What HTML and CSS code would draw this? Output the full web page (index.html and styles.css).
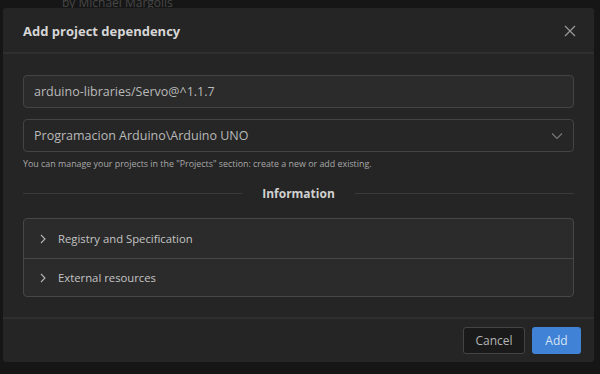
FILE: index.html
```html
<!DOCTYPE html>
<html>
<head>
<meta charset="utf-8">
<link rel="stylesheet" href="styles.css">
</head>
<body>
<div class="page">
  <div class="page-top">by Michael Margolis</div>
</div>
<div class="modal">
  <div class="modal-header">
    <h1 class="modal-title">Add project dependency</h1>
    <button class="close" aria-label="Close">
      <svg width="12" height="12" viewBox="0 0 12 12"><path d="M1 1L11 11M11 1L1 11" stroke="#9a9a9a" stroke-width="1.2" fill="none"/></svg>
    </button>
  </div>
  <div class="modal-body">
    <div class="field">arduino-libraries/Servo@^1.1.7</div>
    <div class="field select">
      <span>Programacion Arduino\Arduino UNO</span>
      <svg width="12" height="8" viewBox="0 0 12 8"><path d="M1 1.5L6 6.5L11 1.5" stroke="#7a7a7a" stroke-width="1.1" fill="none"/></svg>
    </div>
    <p class="help">You can manage your projects in the "Projects" section: create a new or add existing.</p>
    <div class="divider"><span class="line"></span><span class="divider-text">Information</span><span class="line"></span></div>
    <div class="accordion">
      <div class="acc-item">
        <svg width="8" height="10" viewBox="0 0 8 10"><path d="M2 1L6 5L2 9" stroke="#b5b5b5" stroke-width="1.1" fill="none"/></svg>
        <span>Registry and Specification</span>
      </div>
      <div class="acc-item">
        <svg width="8" height="10" viewBox="0 0 8 10"><path d="M2 1L6 5L2 9" stroke="#b5b5b5" stroke-width="1.1" fill="none"/></svg>
        <span>External resources</span>
      </div>
    </div>
  </div>
  <div class="modal-footer">
    <button class="btn cancel">Cancel</button>
    <button class="btn add">Add</button>
  </div>
</div>
</body>
</html>
```
FILE: styles.css
```css
* { box-sizing: border-box; }
html, body { margin: 0; height: 100%; }
body {
  background: #161616;
  font-family: "Open Sans", "Noto Sans", sans-serif;
  overflow: hidden;
  position: relative;
}
.page { height: 100%; display: flow-root; }
.page-top {
  margin: -4px 0 0 62px;
  color: #474747;
  font-size: 12px;
  line-height: 13px;
}
.modal {
  position: absolute;
  left: 3px;
  top: 8px;
  width: 591px;
  height: 354px;
  background: #252525;
  border-radius: 3px;
  display: flex;
  flex-direction: column;
}
.modal-header {
  flex: none;
  height: 46px;
  padding: 2px 18px 0 20px;
  display: flex;
  align-items: center;
  justify-content: space-between;
  border-bottom: 2px solid #2f2f2f;
}
.modal-title {
  margin: 0;
  font-size: 13px;
  line-height: 18px;
  font-weight: 700;
  color: #d6d6d6;
}
.close {
  background: none;
  border: 0;
  padding: 0;
  display: flex;
}
.modal-body {
  flex: none;
  padding: 21px 20px 0;
}
.field {
  height: 33px;
  border: 1px solid #444;
  border-radius: 4px;
  background: #2b2b2b;
  color: #b9b9b9;
  font-size: 12.5px;
  padding: 0 10px;
  display: flex;
  align-items: center;
}
.select {
  margin-top: 11px;
  background: #262626;
  justify-content: space-between;
}
.help {
  margin: 5px 0 0;
  font-size: 8.9px;
  color: #a8a8a8;
  line-height: 13px;
}
.divider {
  margin-top: 15px;
  height: 17px;
  display: flex;
  align-items: center;
  gap: 20px;
}
.line { flex: 1; height: 1px; background: #3a3a3a; }
.divider-text {
  font-size: 12px;
  line-height: 17px;
  font-weight: 700;
  color: #d0d0d0;
}
.accordion {
  margin-top: 16px;
  border: 1px solid #474747;
  border-radius: 4px;
  background: #2b2b2b;
}
.acc-item {
  height: 39px;
  display: flex;
  align-items: center;
  padding-left: 15px;
  gap: 11px;
  color: #c4c4c4;
  font-size: 11.3px;
}
.acc-item + .acc-item { height: 38px; border-top: 1px solid #474747; }
.modal-footer {
  flex: none;
  margin-top: auto;
  border-top: 2px solid #2f2f2f;
  padding: 8px 13px 0 0;
  height: 45px;
  display: flex;
  justify-content: flex-end;
  gap: 7px;
}
.btn {
  height: 27px;
  border-radius: 3px;
  font-family: inherit;
  font-size: 12px;
  padding: 0;
}
.cancel {
  width: 62px;
  background: #1a1a1a;
  border: 1px solid #444;
  color: #b5b5b5;
}
.add {
  width: 49px;
  background: #3f82d6;
  border: 0;
  color: #d8e4f2;
}
```
